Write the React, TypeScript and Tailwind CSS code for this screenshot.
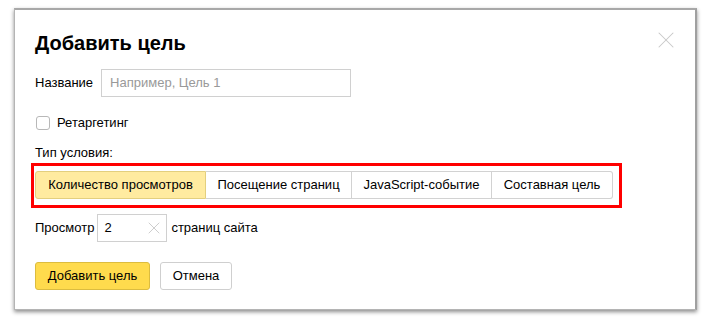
import { X } from "lucide-react";

const tabs = [
  { label: "Количество просмотров", w: "w-[171px]" },
  { label: "Посещение страниц", w: "w-[146px]" },
  { label: "JavaScript-событие", w: "w-[140px]" },
  { label: "Составная цель", w: "w-[121px]" },
];

export default function App() {
  return (
    <div className="w-[711px] h-[319px] bg-white overflow-hidden font-['Liberation_Sans',Arial,sans-serif] text-[13px] text-black">
      <div className="ml-[14px] mt-[8px] w-[683px] h-[302px] bg-white border border-[#b4b4b4] border-t-2 border-r-2 border-t-[#a8a8a8] border-r-[#a0a0a0] shadow-[0_2px_4px_rgba(0,0,0,0.45)] relative">
        <button className="absolute left-[637px] top-[16px] text-[#c8c8c8]">
          <X className="w-[28px] h-[28px]" strokeWidth={0.9} />
        </button>
        <div className="pl-[20px]">
          <h1 className="mt-[21px] text-[20px] leading-6 font-bold">Добавить цель</h1>

          <div className="mt-[14px] flex items-center gap-[8px]">
            <span>Название</span>
            <div className="w-[250px] h-[28px] border border-[#d0d0d0] flex items-center pl-[8px] text-[#999]">
              Например, Цель 1
            </div>
          </div>

          <div className="mt-[19px] flex items-center gap-[7px] h-[14px]">
            <div className="w-[14px] h-[14px] border border-[#b8b8b8] rounded-[3px] ml-[1px]" />
            <span>Ретаргетинг</span>
          </div>

          <div className="mt-[15px] leading-4">Тип условия:</div>

          <div className="mt-[2px] -ml-[4px] w-[591px] h-[45px] border-[3px] border-[#ff0000] pl-[1px] pt-[5px]">
            <div className="flex h-[28px]">
              {tabs.map((t, i) => (
                <div
                  key={t.label}
                  className={
                    i === 0
                      ? `${t.w} flex items-center justify-center bg-[#ffeba0] border border-[#e3cf7e] rounded-l-[3px]`
                      : i === tabs.length - 1
                      ? `${t.w} flex items-center justify-center border border-l-0 border-[#d2d2d2] rounded-r-[3px]`
                      : `${t.w} flex items-center justify-center border border-l-0 border-[#d2d2d2]`
                  }
                >
                  {t.label}
                </div>
              ))}
            </div>
          </div>

          <div className="mt-[6px] flex items-center">
            <span>Просмотр</span>
            <div className="ml-[3px] w-[70px] h-[28px] border border-[#d0d0d0] flex items-center justify-between pl-[6px] pr-[2px]">
              <span>2</span>
              <X className="w-[20px] h-[20px] text-[#c4c4c4]" strokeWidth={1} />
            </div>
            <span className="ml-[4px]">страниц сайта</span>
          </div>

          <div className="mt-[20px] flex gap-[10px]">
            <button className="w-[115px] h-[28px] bg-[#ffdb4d] border border-[#dcbc3f] rounded-[3px]">
              Добавить цель
            </button>
            <button className="w-[72px] h-[28px] bg-white border border-[#cfcfcf] rounded-[3px]">
              Отмена
            </button>
          </div>
        </div>
      </div>
    </div>
  );
}
